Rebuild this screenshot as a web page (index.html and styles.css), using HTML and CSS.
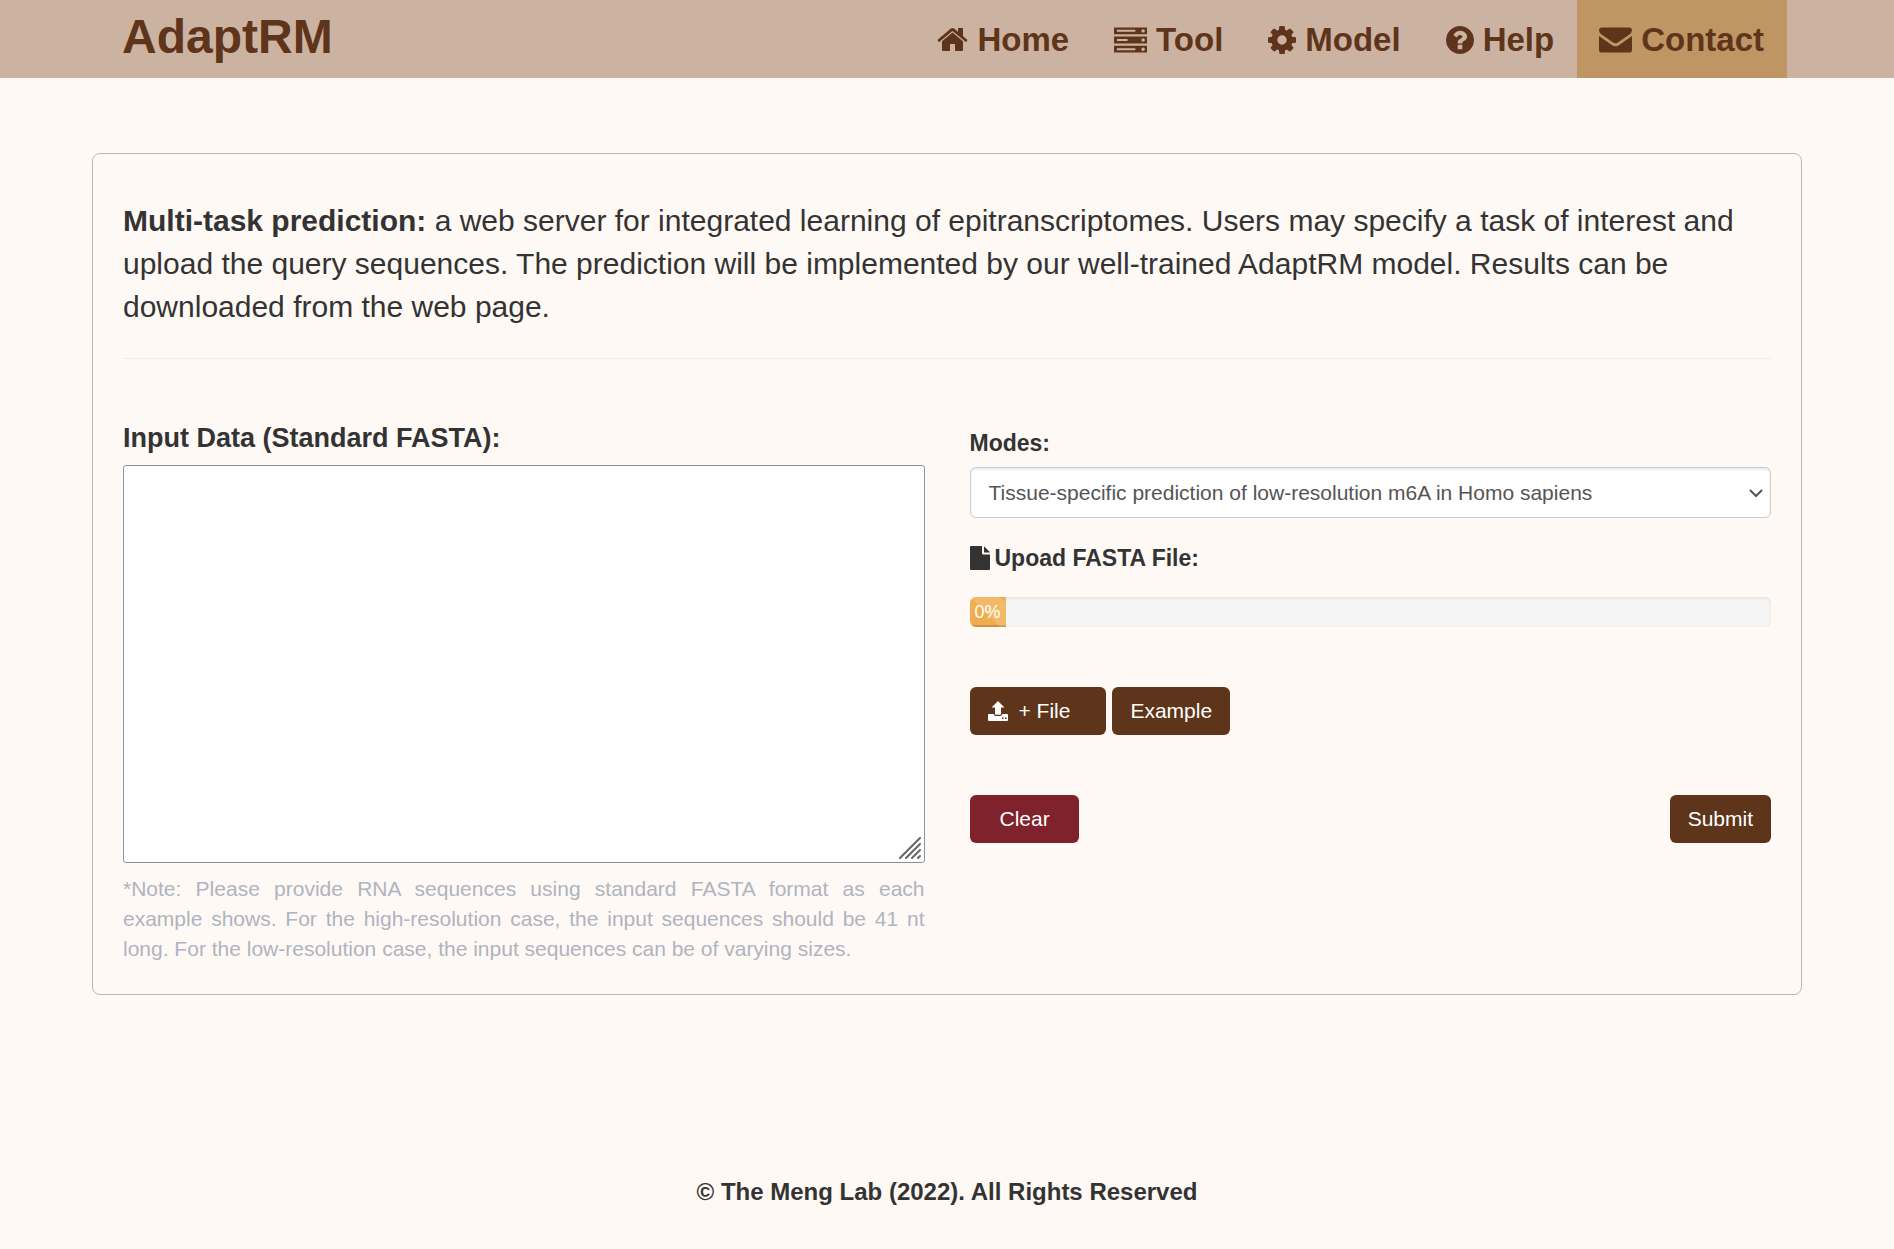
FILE: index.html
```html
<!DOCTYPE html>
<html lang="en">
<head>
	<meta charset="utf-8">
	<title>AdaptRM</title>
	<link rel="stylesheet" href="styles.css">
</head>
<body>

<header class="navbar">
	<div class="navbar-inner">
		<a class="brand" href="#">AdaptRM</a>
		<nav class="menu">
			<a href="#"><svg width="31" height="26" viewBox="0 0 31 26" fill="currentColor"><path d="M15.500 5.500L5 14.200V23q0 1 1 1h7v-7h5v7h7q1 0 1-1v-8.800z"/><path d="M30.300 12.800L26 9.200V1.500q0-.5-.5-.5h-4q-.5 0-.5.5v3.600L17.200 1.600q-1.700-1.300-3.400 0L.7 12.800q-.4.400 0 .8l1 1.200q.4.400.8 0L15.500 4l13 10.800q.4.400.8 0l1-1.200q.4-.4 0-.8z"/></svg>Home</a>
			<a href="#"><svg width="33" height="26" viewBox="0 0 34 26" fill="currentColor"><path fill-rule="evenodd" d="M0 0h34v7H0zM3 2.500v2h19v-2zM30 1.800a1.800 1.800 0 1 0 0 3.600a1.800 1.800 0 1 0 0-3.600zM0 9.500h34v7H0zM3 12v2h11v-2zM30 11.200a1.800 1.800 0 1 0 0 3.600a1.800 1.800 0 1 0 0-3.600zM0 19h34v7H0zM3 21.500v2h19v-2zM30 20.700a1.800 1.800 0 1 0 0 3.600a1.800 1.800 0 1 0 0-3.600z"/></svg>Tool</a>
			<a href="#"><svg width="28" height="28" viewBox="0 0 1536 1536" fill="currentColor"><path d="M1024 768q0-106-75-181t-181-75-181 75-75 181 75 181 181 75 181-75 75-181zm512-109v222q0 12-8 23t-20 13l-185 28q-19 54-39 91 35 50 107 138 10 12 10 25t-9 23q-27 37-99 108t-94 71q-12 0-26-9l-138-108q-44 23-91 38-16 136-29 186-7 28-36 28H657q-14 0-24.500-8.500T621 1506l-28-184q-49-16-90-37l-141 107q-10 9-25 9-14 0-25-11-126-114-165-168-7-10-7-23 0-12 8-23 15-21 51-66.500t54-70.500q-27-50-41-99L29 913q-13-2-21-12.500T0 877V655q0-12 8-23t19-13l186-28q14-46 39-92-40-57-107-138-10-12-10-24 0-10 9-23 26-36 98.500-107.500T337 135q13 0 26 10l138 107q44-23 91-38 16-136 29-186 7-28 36-28h222q14 0 24.500 8.500T915 30l28 184q49 16 90 37l142-107q9-9 24-9 13 0 25 10 129 119 165 170 7 8 7 22 0 12-8 23-15 21-51 66.500t-54 70.500q26 50 41 98l183 28q13 2 21 12.500t8 23.500z"/></svg>Model</a>
			<a href="#"><svg width="28" height="28" viewBox="0 0 1536 1536" fill="currentColor"><path d="M896 1248v-192q0-14-9-23t-23-9H672q-14 0-23 9t-9 23v192q0 14 9 23t23 9h192q14 0 23-9t9-23zm256-672q0-88-55.500-163T958 297t-170-41q-243 0-371 213-15 24 8 42l132 100q7 6 19 6 16 0 25-12 53-68 86-92 34-24 86-24 48 0 85.500 26t37.500 59q0 38-20 61t-68 45q-63 28-115.500 86.500T640 892v36q0 14 9 23t23 9h192q14 0 23-9t9-23q0-19 21.500-49.500T972 829q32-18 49-28.500t46-35 44.500-48 28-60.500 12.500-81zm384 192q0 209-103 385.500T1153.500 1433 768 1536t-385.500-103T103 1153.500 0 768t103-385.500T382.500 103 768 0t385.500 103T1433 382.500 1536 768z"/></svg>Help</a>
			<a class="active" href="#"><svg width="33" height="26" viewBox="0 0 34 26" fill="currentColor"><path d="M34 9v14q0 3-3 3H3q-3 0-3-3V9l13.500 9.300q3.500 2.400 7 0zM34 3q0 2.500-3 4.600L19.800 15.300q-2.800 1.900-5.600 0L3 7.600Q0 5.300 0 3.300 0 0 3 0h28q3 0 3 3z"/></svg>Contact</a>
		</nav>
	</div>
</header>

<main class="panel">
	<p class="intro"><b>Multi-task prediction:</b> a web server for integrated learning of epitranscriptomes. Users may specify a task of interest and upload the query sequences. The prediction will be implemented by our well-trained AdaptRM model. Results can be downloaded from the web page.</p>
	<hr>
	<form class="columns">
		<div>
			<label class="input-title" for="seq">Input Data (Standard FASTA):</label>
			<div class="seq-box">
				<textarea id="seq"></textarea>
				<svg class="grip" width="22" height="22" viewBox="0 0 22 22" stroke="#666" stroke-width="2" stroke-linecap="round"><path d="M1 21L21 1M7 21L21 7M13 21l8-8M19 21l2-2"/></svg>
			</div>
			<p class="note">*Note: Please provide RNA sequences using standard FASTA format as each example shows. For the high-resolution case, the input sequences should be 41 nt long. For the low-resolution case, the input sequences can be of varying sizes.</p>
		</div>
		<div class="options">
			<label class="option-title" for="mode">Modes:</label>
			<div class="select-box">
				<select id="mode">
					<option>Tissue-specific prediction of low-resolution m6A in Homo sapiens</option>
				</select>
				<svg class="arrow" width="14" height="9" viewBox="0 0 14 9" fill="none" stroke="#555" stroke-width="2"><path d="M1 1l6 6 6-6"/></svg>
			</div>
			<div class="option-title upload-title"><svg width="20" height="24" viewBox="0 0 20 24" fill="currentColor"><path d="M12 0v7q0 1.500 1.500 1.500H20V23q0 1-1 1H1q-1 0-1-1V1q0-1 1-1zM14 0.500q.7.300 1 .7l4.300 4.300q.3.300.5 1H14z"/></svg>Upoad FASTA File:</div>
			<div class="progress"><div class="bar">0%</div></div>
			<div class="buttons">
				<button type="button" class="btn btn-file"><svg width="20" height="20" viewBox="0 0 20 20" fill="currentColor"><path d="M10 0l6.500 6.500H13V13q0 .7-.7.700H7.700Q7 13.700 7 13V6.500H3.500z"/><path fill-rule="evenodd" d="M1 13h4.700q.6 2 2 2h4.600q1.400 0 2-2H19q1 0 1 1v5q0 1-1 1H1q-1 0-1-1v-5q0-1 1-1zM14 16.500v1.500h1.500v-1.500zM17 16.500v1.500h1.500v-1.500z"/></svg>+ File</button>
				<button type="button" class="btn">Example</button>
			</div>
			<div class="buttons actions">
				<button type="reset" class="btn btn-clear">Clear</button>
				<button type="submit" class="btn">Submit</button>
			</div>
		</div>
	</form>
</main>

<footer>&copy; The Meng Lab (2022). All Rights Reserved</footer>

</body>
</html>
```
FILE: styles.css
```css
* {
	box-sizing: border-box;
}

body {
	margin: 0;
	background-color: #fff9f5;
	color: #333;
	font-family: "Liberation Sans", Arial, sans-serif;
	font-size: 21px;
	line-height: 30px;
}

/* top bar */
.navbar {
	background-color: #ccb2a0;
}

.navbar-inner {
	display: flex;
	justify-content: space-between;
	max-width: 1710px;
	margin: 0 auto;
	padding: 0 15px 0 30px;
}

.navbar a {
	color: #5e351b;
	font-weight: bold;
	text-decoration: none;
}

.brand {
	font-size: 48px;
	line-height: 74px;
}

.menu {
	display: flex;
}

.menu a {
	display: flex;
	align-items: center;
	gap: 9px;
	height: 78px;
	padding: 2px 23px 0 22px;
	font-size: 33px;
}

.menu a.active {
	background-color: #c09564;
}

/* main box */
.panel {
	max-width: 1710px;
	margin: 75px auto 0;
	padding: 45px 30px 30px;
	border: 1px solid #ccb2a0;
	border-radius: 8px;
}

.intro {
	margin: 0;
	font-size: 30px;
	line-height: 43px;
}

hr {
	margin: 30px 0 60px;
	border: 0;
	border-top: 1px solid #eee;
}

.columns {
	display: grid;
	grid-template-columns: 1fr 1fr;
	gap: 45px;
}

.input-title {
	display: block;
	margin-bottom: 8px;
	font-size: 27px;
	font-weight: bold;
	line-height: 38px;
}

.seq-box, .select-box {
	position: relative;
}

textarea {
	display: block;
	width: 100%;
	height: 398px;
	background-color: #fff;
	border: 1px solid #8f8f9d;
	border-radius: 3px;
	resize: none;
}

.grip {
	position: absolute;
	right: 4px;
	bottom: 4px;
}

.note {
	margin: 11px 0 0;
	color: #aeb4c0;
	text-align: justify;
}

/* right column */
.options {
	padding-top: 8px;
}

.option-title {
	display: block;
	margin-bottom: 8px;
	font-size: 23px;
	font-weight: bold;
	line-height: 32px;
}

select {
	display: block;
	width: 100%;
	height: 51px;
	padding: 0 18px;
	appearance: none;
	background-color: #fff;
	border: 1px solid #ccc;
	border-radius: 6px;
	box-shadow: inset 0 2px 2px rgba(0, 0, 0, .08);
	color: #555;
	font-family: inherit;
	font-size: 21px;
}

.arrow {
	position: absolute;
	right: 8px;
	top: 22px;
}

.upload-title {
	display: flex;
	align-items: center;
	gap: 5px;
	margin: 24px 0 23px;
}

.progress {
	height: 30px;
	overflow: hidden;
	background-color: #f5f5f5;
	border-radius: 6px;
	box-shadow: inset 0 1px 3px rgba(0, 0, 0, .1);
}

.bar {
	width: 36px;
	height: 30px;
	background-color: #f0ad4e;
	background-image: linear-gradient(45deg, rgba(255, 255, 255, .15) 25%, transparent 25%, transparent 50%, rgba(255, 255, 255, .15) 50%, rgba(255, 255, 255, .15) 75%, transparent 75%);
	background-size: 60px 60px;
	box-shadow: inset 0 -2px 0 rgba(0, 0, 0, .15);
	color: #fff;
	font-size: 18px;
	text-align: center;
}

.buttons {
	display: flex;
	gap: 6px;
	margin-top: 60px;
}

.actions {
	justify-content: space-between;
}

.btn {
	height: 48px;
	padding: 0 18px;
	background-color: #5e351b;
	border: 0;
	border-radius: 6px;
	color: #fff;
	font-family: inherit;
	font-size: 21px;
}

.btn-file {
	display: flex;
	align-items: center;
	gap: 11px;
	padding-right: 36px;
}

.btn-clear {
	padding: 0 29px 0 30px;
	background-color: #7f222c;
}

footer {
	margin-top: 180px;
	padding-bottom: 40px;
	font-size: 24px;
	font-weight: bold;
	line-height: 34px;
	text-align: center;
}
```
